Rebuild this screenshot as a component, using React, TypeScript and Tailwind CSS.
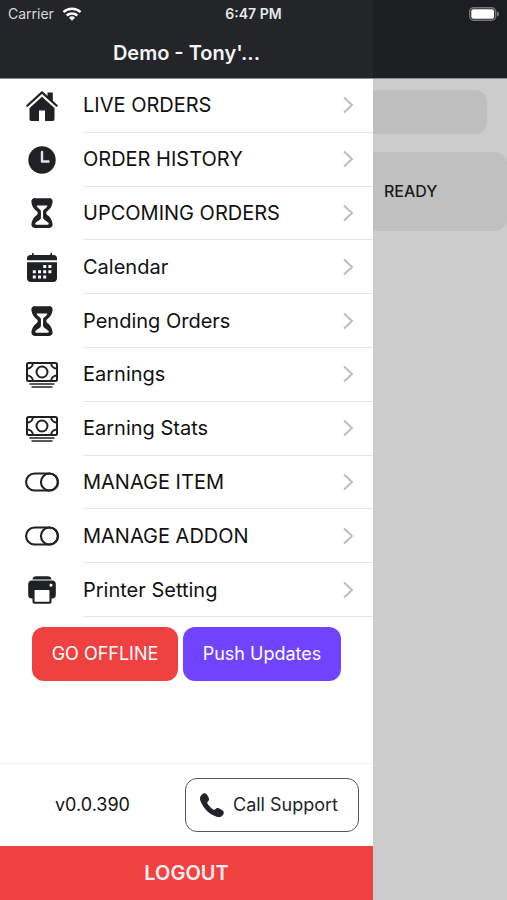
import type { ComponentType } from "react"
import { IoHourglass, IoPrint, IoToggleOutline } from "react-icons/io5"

interface IconProps {
  className?: string
}

interface MenuItem {
  label: string
  icon: ComponentType<IconProps>
}

function HomeIcon({ className }: IconProps) {
  return (
    <svg viewBox="0 0 34 34" className={className} aria-hidden="true">
      <path d="M22.500 3.500h5.300V14l-5.300-4z" fill="currentColor" />
      <path d="M17 6.500 29.500 17.500v12.700a1.800 1.800 0 0 1-1.800 1.800H20V21.500h-6V32H6.300a1.800 1.800 0 0 1-1.800-1.800V17.500z" fill="currentColor" />
      <path d="M3.500 17.700 17 5.500l13.500 12.200" fill="none" stroke="#fff" strokeWidth="3.200" />
      <path d="M2.300 16.700 17 3.400l14.700 13.300" fill="none" stroke="currentColor" strokeWidth="2.200" strokeLinecap="round" strokeLinejoin="round" />
    </svg>
  )
}

function ClockIcon({ className }: IconProps) {
  return (
    <svg viewBox="0 0 34 34" className={className} aria-hidden="true">
      <circle cx="17" cy="17" r="13.700" fill="currentColor" />
      <path d="M17 9v9.500h6.500" fill="none" stroke="#e4e4e4" strokeWidth="2.400" strokeLinecap="round" strokeLinejoin="round" />
    </svg>
  )
}

function CalendarIcon({ className }: IconProps) {
  return (
    <svg viewBox="-1 -1 34 34" className={className} fill="currentColor" aria-hidden="true">
      <path d="M6 2h1.600v2h16.800V2H26v2h1.500A3.500 3.500 0 0 1 31 7.500V9.200H1V7.500A3.500 3.500 0 0 1 4.500 4H6z" />
      <path
        fillRule="evenodd"
        d="M1 11.200h30V27a4 4 0 0 1-4 4H5a4 4 0 0 1-4-4zM17.200 14v3h3v-3zm5.200 0v3h3v-3zM6.800 19.200v3h3v-3zm5.200 0v3h3v-3zm5.200 0v3h3v-3zm5.200 0v3h3v-3zM6.800 24.400v3h3v-3zm5.200 0v3h3v-3zm5.200 0v3h3v-3z"
      />
    </svg>
  )
}

function CashIcon({ className }: IconProps) {
  return (
    <svg viewBox="0 0 34 34" className={className} fill="none" stroke="currentColor" strokeWidth="2" aria-hidden="true">
      <rect x="2" y="5" width="30" height="18" rx="1.500" />
      <circle cx="17" cy="14" r="5.500" />
      <path d="M8 5a6 6 0 0 1-6 5.500M26 5a6 6 0 0 0 6 5.500M8 23a6 6 0 0 0-6-5.500M26 23a6 6 0 0 1 6-5.500" />
      <path d="M4.500 26h25M6.500 29h21" strokeWidth="1.600" />
    </svg>
  )
}

function PhoneIcon({ className }: IconProps) {
  return (
    <svg viewBox="0 0 26 26" className={className} fill="currentColor" aria-hidden="true">
      <path d="M2.200 3.300C4 .8 6.800.6 8.200 3l1.500 2.700c.8 1.600.4 2.800-.8 3.900-.8.700-.8 1.300-.3 2.200 1.300 2.200 3.200 4.200 5.500 5.600.9.500 1.500.5 2.200-.2 1.100-1.200 2.400-1.600 4-.7l3 1.800c2.200 1.400 1.900 3.800-.3 5.600-1.700 1.400-3.700 1.500-6 .7C9.600 22 3.800 15.600 1.300 8.600.6 6.500 1 4.900 2.200 3.300z" />
    </svg>
  )
}

function ChevronIcon() {
  return (
    <svg viewBox="0 0 12 20" className="h-5 w-3" fill="none" stroke="#bdbdbf" strokeWidth="2" aria-hidden="true">
      <path d="M2 2.500 10 10 2 17.500" />
    </svg>
  )
}

function WifiIcon() {
  return (
    <svg viewBox="0 0 20 14" className="h-3.5 w-5" fill="none" stroke="#fff" strokeWidth="2.500" aria-hidden="true">
      <path d="M1.500 5.200a12.300 12.300 0 0 1 17 0M4.700 8.500a7.700 7.700 0 0 1 10.600 0" />
      <path d="M10 13.800 7 10.800a4.300 4.300 0 0 1 6 0z" fill="#fff" stroke="none" />
    </svg>
  )
}

function BatteryIcon() {
  return (
    <svg viewBox="0 0 30 14" className="h-3.5 w-[30px]" aria-hidden="true">
      <rect x="0.700" y="0.700" width="26" height="12.600" rx="4" fill="none" stroke="#77787b" strokeWidth="1.400" />
      <rect x="2.300" y="2.300" width="22.800" height="9.400" rx="2" fill="#fff" />
      <path d="M28 4.500c1.500.6 2 1.500 2 2.500s-.5 1.900-2 2.500z" fill="#77787b" />
    </svg>
  )
}

const menuItems: MenuItem[] = [
  { label: "LIVE ORDERS", icon: HomeIcon },
  { label: "ORDER HISTORY", icon: ClockIcon },
  { label: "UPCOMING ORDERS", icon: IoHourglass },
  { label: "Calendar", icon: CalendarIcon },
  { label: "Pending Orders", icon: IoHourglass },
  { label: "Earnings", icon: CashIcon },
  { label: "Earning Stats", icon: CashIcon },
  { label: "MANAGE ITEM", icon: IoToggleOutline },
  { label: "MANAGE ADDON", icon: IoToggleOutline },
  { label: "Printer Setting", icon: IoPrint },
]

function StatusBar() {
  return (
    <div className="absolute inset-x-0 top-0 grid h-7 grid-cols-3 items-center px-2 text-sm text-white">
      <span className="flex items-center gap-2 text-[#d8d8da]">
        Carrier
        <WifiIcon />
      </span>
      <span className="text-center font-semibold whitespace-nowrap text-[#e8e8ea]">6:47 PM</span>
      <span className="flex justify-end">
        <BatteryIcon />
      </span>
    </div>
  )
}

function Drawer() {
  return (
    <aside className="flex flex-1 flex-col bg-white">
      <header className="flex h-[79px] items-end justify-center border-b border-[#8b8c90] bg-[#232528] pb-[11px]">
        <h1 className="text-xl font-semibold text-[#f4f4f5]">Demo - Tony'...</h1>
      </header>
      <nav>
        <ul className="grid h-[538px] grid-rows-10">
          {menuItems.map(({ label, icon: Icon }) => (
            <li key={label} className="flex">
              <a href="#" className="flex flex-1 pl-[25px]">
                <span className="flex w-[58px] items-center">
                  <Icon className="h-[34px] w-[34px] text-[#1f2123]" />
                </span>
                <span className="flex flex-1 items-center justify-between border-b border-[#e6e6e7] pr-[19px]">
                  {label}
                  <ChevronIcon />
                </span>
              </a>
            </li>
          ))}
        </ul>
      </nav>
      <div className="mt-2.5 flex justify-center gap-[5px] text-lg text-white">
        <button className="h-[54px] w-[146px] rounded-xl bg-[#f04141]">GO OFFLINE</button>
        <button className="h-[54px] w-[158px] rounded-xl bg-[#7044ff]">Push Updates</button>
      </div>
      <footer className="mt-auto">
        <div className="flex items-center border-t border-[#f0f0f0] py-[14px] pr-[14px] text-lg">
          <span className="flex-1 text-center">v0.0.390</span>
          <button className="flex h-[54px] w-[174px] items-center gap-2 rounded-xl border border-[#55575a] pl-[13px] text-[#222428]">
            <PhoneIcon className="h-[26px] w-[26px]" />
            Call Support
          </button>
        </div>
        <button className="h-[54px] w-full bg-[#f04141] text-xl font-semibold text-[#fdeeee]">LOGOUT</button>
      </footer>
    </aside>
  )
}

function OrdersBackdrop() {
  return (
    <main className="w-[134px] bg-[#cccccc]">
      <div className="h-[79px] border-b border-[#8b8c90] bg-[#1c1e20]" />
      <div className="mt-[11px] mr-5 h-11 rounded-r-xl bg-[#bfbfbf]" />
      <div className="mt-[18px] h-[79px] rounded-r-xl bg-[#c0c0c0] pt-[27px] pl-[11px] text-base font-medium text-[#1c1c1c]">
        READY
      </div>
    </main>
  )
}

export default function App() {
  return (
    <div className="relative flex min-h-screen font-['Inter','Liberation_Sans',sans-serif] text-xl text-[#111111]">
      <Drawer />
      <OrdersBackdrop />
      <StatusBar />
    </div>
  )
}
